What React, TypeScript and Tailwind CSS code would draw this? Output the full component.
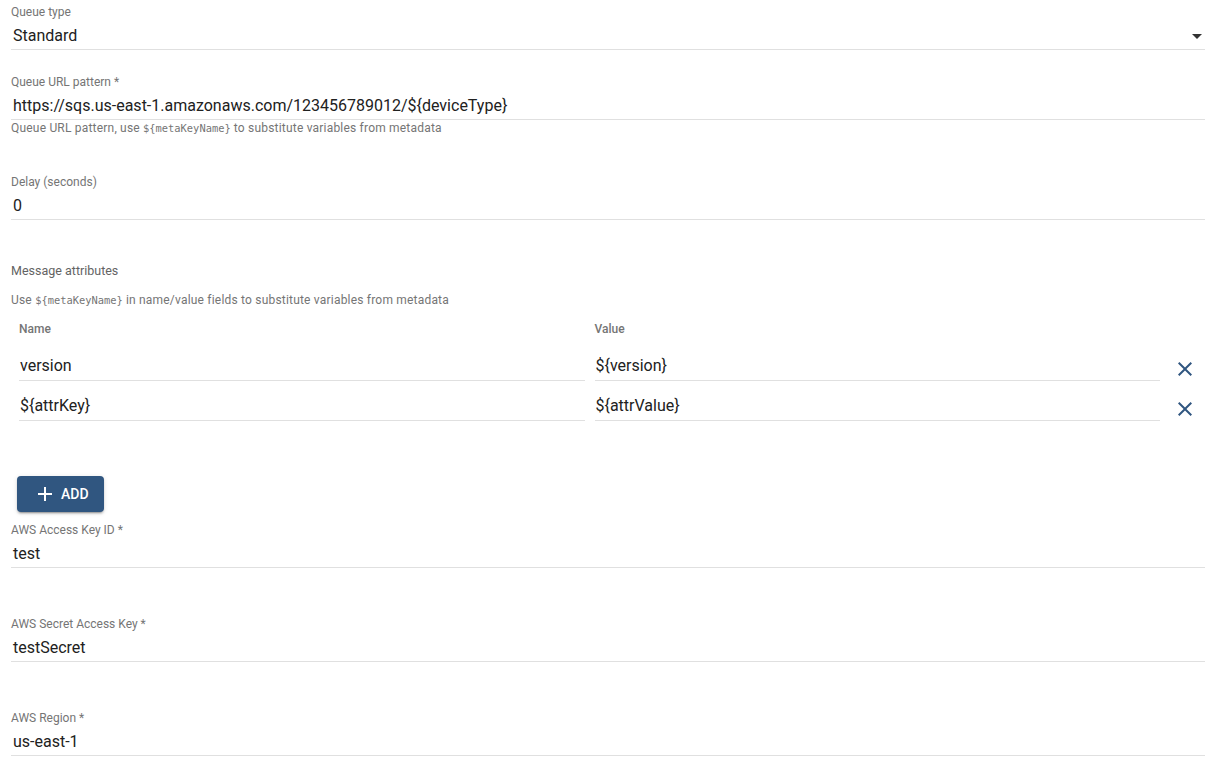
import React from "react";

const labelCls = "block text-[12px] leading-[12px] text-[#757575]";
const valueCls = "text-[16px] leading-[19px] text-[#212121]";
const helperCls = "flex h-[14px] items-center whitespace-pre text-[12px] leading-[14px] tracking-[0.2px] text-[#757575]";

function Code({ children }: { children: React.ReactNode }) {
  return (
    <code className="font-['DejaVu_Sans_Mono',monospace] text-[10.4px] leading-none tracking-normal">{children}</code>
  );
}

function Field({
  label,
  value,
  required,
  select,
  className = "",
}: {
  label: string;
  value: string;
  required?: boolean;
  select?: boolean;
  className?: string;
}) {
  return (
    <div className={className}>
      <label className={labelCls}>
        {label}
        {required && <span> *</span>}
      </label>
      <div className="flex items-center justify-between border-b border-[#e0e0e0] pt-[8px] pb-[4px]">
        <span className={`${valueCls} pl-[2px]`}>{value}</span>
        {select && (
          <svg viewBox="0 0 24 24" className="-mr-[4px] -my-[3px] h-[24px] w-[24px] fill-[#333]">
            <path d="M7 10l5 5 5-5z" />
          </svg>
        )}
      </div>
    </div>
  );
}

function AttrRow({ name, value }: { name: string; value: string }) {
  return (
    <div className="flex h-[40px] items-start">
      <div className="flex flex-1 border-b border-[#e0e0e0] pt-[15px] pb-[5px] pl-[1px]">
        <span className={valueCls}>{name}</span>
      </div>
      <div className="ml-[10px] flex flex-1 border-b border-[#e0e0e0] pt-[15px] pb-[5px] pl-[1px]">
        <span className={valueCls}>{value}</span>
      </div>
      <div className="flex w-[45px] justify-center pt-[16px] pl-[5px]">
        <button className="flex text-[#305680]">
          <svg viewBox="0 0 24 24" className="h-[24px] w-[24px] fill-current">
            <path d="M19 6.41L17.59 5 12 10.59 6.41 5 5 6.41 10.59 12 5 17.59 6.41 19 12 13.41 17.59 19 19 17.59 13.41 12z" />
          </svg>
        </button>
      </div>
    </div>
  );
}

export default function App() {
  return (
    <div className="w-[1205px] bg-white pt-[6px] pl-[11px] font-['Roboto',sans-serif]">
      <Field label="Queue type" value="Standard" select />

      <div className="mt-[26px]">
        <Field label="Queue URL pattern" required value="https://sqs.us-east-1.amazonaws.com/123456789012/${deviceType}" />
        <p className={`mt-[1px] ${helperCls}`}>
          {"Queue URL pattern, use "}
          <Code>{"${metaKeyName}"}</Code>
          {" to substitute variables from metadata"}
        </p>
      </div>

      <Field className="mt-[41px]" label="Delay (seconds)" value="0" />

      <div className="mt-[43px]">
        <p className="text-[12.5px] leading-[15px] text-[#636363]">Message attributes</p>
        <p className={`mt-[15px] ${helperCls}`}>
          {"Use "}
          <Code>{"${metaKeyName}"}</Code>
          {" in name/value fields to substitute variables from metadata"}
        </p>

        <div className="pl-[8px]">
          <div className="mt-[16px] flex h-[12px] text-[12px] leading-[12px] font-medium text-[#757575]">
            <span className="flex-1">Name</span>
            <span className="ml-[10px] flex-1">Value</span>
            <span className="w-[45px]" />
          </div>
          <div className="mt-[6px]">
            <AttrRow name="version" value="${version}" />
            <AttrRow name="${attrKey}" value="${attrValue}" />
          </div>
        </div>
      </div>

      <button className="mt-[55px] ml-[6px] flex h-[36px] items-center gap-[4px] rounded-[4px] bg-[#305680] pr-[15px] pl-[16px] text-[14px] font-medium text-white shadow-[0_3px_1px_-2px_rgba(0,0,0,0.2),0_2px_2px_0_rgba(0,0,0,0.14),0_1px_5px_0_rgba(0,0,0,0.12)]">
        <svg viewBox="0 0 24 24" className="h-[24px] w-[24px] fill-current">
          <path d="M19 13h-6v6h-2v-6H5v-2h6V5h2v6h6v2z" />
        </svg>
        ADD
      </button>

      <Field className="mt-[12px]" label="AWS Access Key ID" required value="test" />
      <Field className="mt-[50px]" label="AWS Secret Access Key" required value="testSecret" />
      <Field className="mt-[50px] pb-[5px]" label="AWS Region" required value="us-east-1" />
    </div>
  );
}
